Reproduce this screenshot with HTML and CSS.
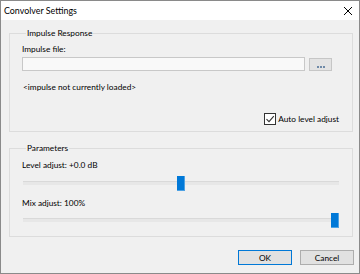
FILE: index.html
```html
<!DOCTYPE html>
<html>
<head>
<meta charset="utf-8">
<link rel="stylesheet" href="styles.css">
</head>
<body>
<div class="window">
  <div class="titlebar">
    <span class="title">Convolver Settings</span>
    <svg class="close" width="10" height="10" viewBox="0 0 10 10"><path d="M1 1L9 9M9 1L1 9" stroke="#000" stroke-width="1"/></svg>
  </div>
  <div class="client">
    <fieldset class="group g1">
      <legend>Impulse Response</legend>
      <div class="label l-file">Impulse file:</div>
      <div class="filerow">
        <div class="textbox"></div>
        <div class="browse"><span class="dots"><i></i><i></i><i></i></span></div>
      </div>
      <div class="label l-status">&lt;impulse not currently loaded&gt;</div>
      <div class="checkrow">
        <span class="checkbox"><svg width="10" height="10" viewBox="0 0 10 10"><path d="M1.5 5.2L4 7.6L8.8 2.2" fill="none" stroke="#333" stroke-width="1.1"/></svg></span>
        <span class="label">Auto level adjust</span>
      </div>
    </fieldset>
    <fieldset class="group g2">
      <legend>Parameters</legend>
      <div class="label l-level">Level adjust: +0.0 dB</div>
      <div class="slider s1"><div class="track"></div><div class="thumb" style="left:154px"></div></div>
      <div class="label l-mix">Mix adjust: 100%</div>
      <div class="slider s2"><div class="track"></div><div class="thumb" style="left:308px"></div></div>
    </fieldset>
    <div class="buttons">
      <div class="btn default">OK</div>
      <div class="btn">Cancel</div>
    </div>
  </div>
</div>
</body>
</html>
```
FILE: styles.css
```css
html, body { margin: 0; padding: 0; }
body { font-family: Lato, "Noto Sans", sans-serif; font-size: 8.3px; color: #000; }
.window {
  width: 358px; height: 272px;
  border: 1px solid #8a8a8a;
  background: #f0f0f0;
  display: flex; flex-direction: column;
}
.titlebar {
  height: 19px; background: #fff;
  display: flex; align-items: center; justify-content: space-between;
  padding-left: 3px; padding-right: 6px;
}
.title { font-size: 8.9px; line-height: 10px; }
.close { display: block; }
.client { display: flex; flex-direction: column; flex: 1; }
.group {
  margin: 8px 6px 0 8px; padding: 0 12px;
  border: 1px solid #dcdcdc;
  display: flex; flex-direction: column;
  min-width: 0;
}
.group legend { padding: 0 1px; margin-left: 4px; line-height: 10px; height: 10px; }
.label { line-height: 10px; height: 10px; white-space: nowrap; }
.l-file { margin-top: 6px; }
.filerow { display: flex; margin-top: 3px; height: 14px; }
.textbox { width: 281px; height: 12px; border: 1px solid #c8c8c8; background: #f9f9f9; }
.browse {
  margin-left: 4px; margin-top: 1px; width: 21px; height: 11px;
  border: 1px solid #c6c6c6; background: #e3e3e3;
  display: flex; align-items: flex-end; justify-content: center;
}
.dots { display: flex; gap: 1px; margin-bottom: 2px; }
.dots i { width: 2px; height: 2px; background: #6f8aa8; display: block; }
.l-status { margin-top: 11px; margin-left: 1px; }
.checkrow {
  margin-top: 21px; height: 12px;
  display: flex; align-items: center; justify-content: flex-end;
  padding-right: 1px; gap: 2px;
}
.checkbox {
  width: 10px; height: 10px; border: 1px solid #333; background: #fff;
  display: flex; align-items: center; justify-content: center;
}
.checkbox svg { display: block; }
.g1 { padding-bottom: 6px; }
.g2 { margin-top: 11px; padding-bottom: 8px; }
.l-level { margin-top: 7px; }
.l-mix { margin-top: 7px; }
.slider { position: relative; height: 15px; width: 316px; margin-left: 1px; }
.s1 { margin-top: 6px; }
.s2 { margin-top: 5px; }
.track {
  position: absolute; left: 0; right: 0; top: 5px; height: 4px;
  background: #e7e7e7; border-top: 1px solid #d9d9d9; box-sizing: border-box;
}
.thumb {
  position: absolute; top: 0; width: 8px; height: 15px;
  background: #0078d7; box-sizing: border-box;
  border-right: 1px solid #4ea2e4; border-bottom: 1px solid #4ea2e4;
}
.buttons { display: flex; justify-content: flex-end; gap: 8px; margin-top: 13px; margin-right: 5px; }
.btn {
  width: 54px; height: 15px; box-sizing: border-box;
  border: 1px solid #adadad; background: #e1e1e1;
  display: flex; align-items: center; justify-content: center;
  line-height: 10px;
}
.btn.default { border-color: #0078d7; }
```
